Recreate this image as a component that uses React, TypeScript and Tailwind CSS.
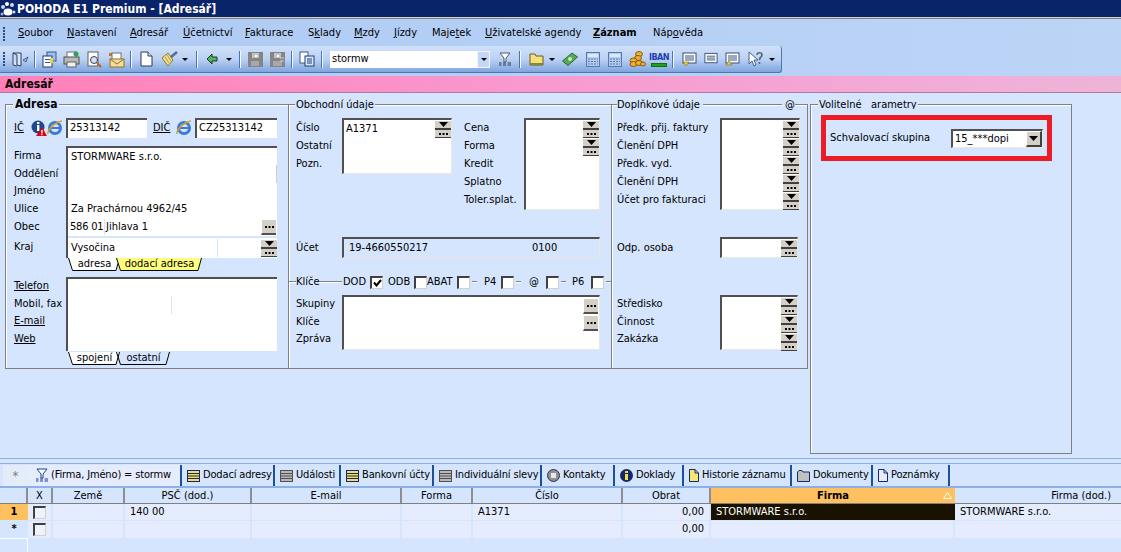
import React from "react";

const Triangle = () => (
  <svg width="9" height="5" viewBox="0 0 9 5" className="block">
    <polygon points="0,0 9,0 4.5,5" fill="#000" />
  </svg>
);

const Dots = () => (
  <svg width="9" height="2" viewBox="0 0 9 2" className="block">
    <rect x="0" width="2" height="2" fill="#000" />
    <rect x="3.5" width="2" height="2" fill="#000" />
    <rect x="7" width="2" height="2" fill="#000" />
  </svg>
);

const Stack = () => (
  <div className="w-[16px] h-[18px] flex flex-col shrink-0">
    <div className="h-[10px] bg-[#d4d0c8] border-t border-t-white border-b-2 border-b-[#404040] flex items-center justify-center">
      <Triangle />
    </div>
    <div className="h-[8px] bg-[#d4d0c8] border-b border-b-[#404040] flex items-center justify-center">
      <Dots />
    </div>
  </div>
);

const DotsButton = ({ className = "" }: { className?: string }) => (
  <div className={"w-[15px] h-[16px] shrink-0 bg-[#d4d0c8] border-t border-l border-white border-b-2 border-b-[#505050] flex items-center justify-center " + className}>
    <Dots />
  </div>
);

const sunken = "border-t-2 border-l-2 border-t-[#505050] border-l-[#505050] border-r border-b border-r-[#e8e8e0] border-b-[#e8e8e0]";
const frame = "border border-[#808080] shadow-[inset_1px_1px_0_#ffffff]";
const rule = "h-[2px] bg-[#808080] border-b border-white";

const Check = ({ on = false, small = false }: { on?: boolean; small?: boolean }) => (
  <div className={"w-[13px] h-[13px] shrink-0 border-t-2 border-l-2 border-t-[#404040] border-l-[#404040] border-r border-b border-r-[#d4d0c8] border-b-[#d4d0c8] flex items-center justify-center " + (small ? "bg-[#eef2fa]" : "bg-white")}>
    {on && (
      <svg width="9" height="8" viewBox="0 0 9 8">
        <path d="M1 3.5 L3.5 6.5 L8 1" fill="none" stroke="#000" strokeWidth="2" />
      </svg>
    )}
  </div>
);

const Labels = ({ items, className }: { items: { t: string; u?: boolean }[]; className: string }) => (
  <div className={"flex flex-col shrink-0 " + className}>
    {items.map((i) => (
      <div key={i.t} className={"h-[17.7px] leading-[17.7px] whitespace-nowrap " + (i.u ? "underline" : "")}>
        {i.t}
      </div>
    ))}
  </div>
);

const TabShape = ({ label, bg, wide }: { label: string; bg: string; wide: string }) => {
  return (
    <div className={"flex h-[13px] -ml-[4px] first:ml-0 " + wide}>
      <svg width="7" height="13" viewBox="0 0 7 13" className="shrink-0">
        <polygon points="0,0 7,0 7,13 4,13" fill={bg} />
        <path d="M0.5 0 L4.5 12.5 L7 12.5" fill="none" stroke="#000" />
      </svg>
      <div className="flex-1 border-b border-black text-center leading-[12px]" style={{ background: bg === "none" ? undefined : bg }}>
        {label}
      </div>
      <svg width="6" height="13" viewBox="0 0 6 13" className="shrink-0">
        <polygon points="0,0 6,0 2,13 0,13" fill={bg} />
        <path d="M0 12.5 L2 12.5 L5.5 0" fill="none" stroke="#000" />
      </svg>
    </div>
  );
};

/* toolbar pictures */
const Door = () => (
  <svg width="17" height="17" viewBox="0 0 17 17">
    <path d="M1 2 H9 V15 L5 14 V4 L1 2 V14 L5 15" fill="#dbe6f7" stroke="#2a3f66" />
    <path d="M16 6 L11 9 L14 11 Z" fill="#9ab8e8" stroke="#2a3f66" strokeWidth="0.7" />
  </svg>
);
const Copy = () => (
  <svg width="17" height="17" viewBox="0 0 17 17">
    <rect x="6" y="1" width="9" height="9" fill="#9cc0ee" stroke="#3a5a90" />
    <rect x="2" y="5" width="9" height="11" fill="#fff" stroke="#1f3f80" />
    <rect x="4" y="8" width="5" height="1" fill="#2a56a8" />
    <rect x="4" y="11" width="5" height="1" fill="#2a56a8" />
    <rect x="9" y="7" width="3" height="5" fill="#f0d040" />
  </svg>
);
const Printer = () => (
  <svg width="17" height="17" viewBox="0 0 17 17">
    <rect x="4" y="1" width="9" height="6" fill="#fff" stroke="#707070" />
    <rect x="1" y="6" width="15" height="7" fill="#b8b8b8" stroke="#505050" />
    <rect x="4" y="11" width="9" height="5" fill="#f0f0f0" stroke="#606060" />
    <circle cx="13" cy="3" r="2.5" fill="#30a050" />
  </svg>
);
const Preview = () => (
  <svg width="17" height="17" viewBox="0 0 17 17">
    <rect x="2" y="1" width="10" height="14" fill="#fff" stroke="#606060" />
    <circle cx="8" cy="9" r="3.5" fill="#cfe2f8" stroke="#404040" />
    <path d="M11 12 L15 16" stroke="#b06820" strokeWidth="2" />
  </svg>
);
const Envelope = () => (
  <svg width="17" height="17" viewBox="0 0 17 17">
    <rect x="1" y="2" width="8" height="3" fill="#e07020" />
    <rect x="4" y="2" width="9" height="7" fill="#fff" stroke="#707070" />
    <rect x="2" y="8" width="14" height="8" fill="#f5dc9a" stroke="#90702a" />
    <path d="M2 8 L9 13 L16 8" fill="none" stroke="#90702a" />
  </svg>
);
const NewDoc = () => (
  <svg width="13" height="16" viewBox="0 0 13 16">
    <path d="M1 1 H8 L12 5 V15 H1 Z" fill="#fff" stroke="#2a3a5a" />
    <path d="M8 1 V5 H12" fill="#dfe8f6" stroke="#2a3a5a" />
  </svg>
);
const Broom = () => (
  <svg width="18" height="16" viewBox="0 0 18 16">
    <path d="M2 7 L8 2 L13 9 L8 15 Z" fill="#f3e08a" stroke="#8a7a30" />
    <path d="M11 6 L17 1" stroke="#5a6a90" strokeWidth="2.5" />
    <path d="M5 6 L9 12 M7 4 L11 10" stroke="#b09a40" />
  </svg>
);
const Back = () => (
  <svg width="12" height="12" viewBox="0 0 12 12">
    <path d="M6 1 L1 6 L6 11 V8 H11 V4 H6 Z" fill="#58b060" stroke="#104020" />
  </svg>
);
const Save = ({ two }: { two?: boolean }) => (
  <svg width="15" height="15" viewBox="0 0 15 15">
    <rect width="15" height="15" fill="#858585" />
    <rect x="4" y="1" width="7" height="5" fill="#c4c4c4" />
    <rect x="3" y="9" width={two ? 9 : 8} height="5" fill="#a8a8a8" />
    {two && <path d="M10 6 H14 M10 9 H14" stroke="#d0d0d0" />}
    <rect x="7" y="3" width="2" height="2" fill="#fff" />
  </svg>
);
const Clip = () => (
  <svg width="16" height="16" viewBox="0 0 16 16">
    <rect x="1" y="1" width="8" height="11" fill="#fff" stroke="#3a5a90" />
    <rect x="6" y="5" width="9" height="10" fill="#dce8fa" stroke="#1f3f80" />
    <path d="M8 8 H13 M8 10 H13 M8 12 H13" stroke="#1f3f80" />
  </svg>
);
const Filter = ({ dark }: { dark?: boolean }) => (
  <svg width="16" height="15" viewBox="0 0 16 15" className="shrink-0">
    <path d="M3 1 H13 L9 6 V10 H7 V6 Z" fill="#fff" stroke={dark ? "#1f3f90" : "#505a70"} />
    <path d="M2 11 H4.5 M6 11 H9 M10.5 11 H14 M2 13 H4.5 M6 13 H9 M10.5 13 H14" stroke={dark ? "#1f3f90" : "#303a50"} strokeWidth="1.2" />
  </svg>
);
const Folder = () => (
  <svg width="15" height="13" viewBox="0 0 15 13">
    <path d="M1 1 H6 L7 3 H14 V12 H1 Z" fill="#f2e07c" stroke="#6a5a20" />
    <rect x="1" y="10" width="13" height="2" fill="#8a8a20" />
  </svg>
);
const Money = () => (
  <svg width="16" height="14" viewBox="0 0 16 14">
    <path d="M0.5 9 L10 1 L15.5 5 L6 13.5 Z" fill="#58a850" stroke="#2a6a30" />
    <circle cx="8" cy="7" r="2" fill="#c8e8c0" />
  </svg>
);
const Calc = () => (
  <svg width="14" height="15" viewBox="0 0 14 15">
    <rect x="0.5" y="0.5" width="13" height="14" fill="#b4cbec" stroke="#5578b0" />
    <rect x="2" y="2" width="10" height="3" fill="#dfe9f8" />
    <path d="M2 7 H12 M2 9.5 H12 M2 12 H12" stroke="#5578b0" strokeDasharray="2 1" />
  </svg>
);
const Coins = () => (
  <svg width="17" height="16" viewBox="0 0 17 16">
    <ellipse cx="10" cy="3" rx="3.5" ry="2.5" fill="#eeb030" stroke="#8a5a10" />
    <ellipse cx="9" cy="7" rx="3.5" ry="2.5" fill="#eeb030" stroke="#8a5a10" />
    <ellipse cx="4.5" cy="9.5" rx="3.5" ry="2.5" fill="#eeb030" stroke="#8a5a10" />
    <ellipse cx="4.5" cy="13" rx="3.5" ry="2.5" fill="#eeb030" stroke="#8a5a10" />
    <ellipse cx="10" cy="12" rx="3.5" ry="2.5" fill="#eeb030" stroke="#8a5a10" />
    <ellipse cx="14" cy="13" rx="2.5" ry="2" fill="#eeb030" stroke="#8a5a10" />
  </svg>
);
const Iban = () => (
  <div className="flex flex-col items-center w-[17px]">
    <span className="text-[9px] leading-[10px] font-bold text-[#1f3fb0] tracking-[-0.5px]">IBAN</span>
    <div className="w-[16px] h-[4px] bg-[#20a020] border border-[#107010] mt-[1px]" />
  </div>
);
const Note = ({ mark }: { mark?: "down" | "up" }) => (
  <svg width="15" height="14" viewBox="0 0 15 14">
    <rect x="1" y="1" width="13" height="10" fill="#fff" stroke="#39507a" />
    <path d="M3 4 H12 M3 6 H12 M3 8 H12" stroke="#39507a" />
    {mark === "down" && <polygon points="1,10 7,10 4,14" fill="#f0d030" stroke="#806a10" strokeWidth="0.6" />}
    {mark === "up" && <polygon points="1,13 7,13 4,9" fill="#f0d030" stroke="#806a10" strokeWidth="0.6" />}
  </svg>
);
const Help = () => (
  <div className="flex items-center">
    <svg width="16" height="16" viewBox="0 0 16 16">
      <path d="M1 1 L1 13 L4 10 L6 15 L8 14 L6 9 L10 9 Z" fill="#fff" stroke="#4a6090" />
      <path d="M9 4 C9 1 14 1 14 4 C14 6 11.5 6 11.5 9 M11.5 11 V13" fill="none" stroke="#58647a" strokeWidth="1.6" />
    </svg>
  </div>
);
const Sep = () => <div className="w-[2px] h-[17px] bg-[#f4f8ff] border-l border-[#4a72b4]" />;
const Drop = () => (
  <svg width="6" height="3" viewBox="0 0 6 3">
    <polygon points="0,0 6,0 3,3" fill="#000" />
  </svg>
);
const Grip = () => (
  <div className="flex flex-col gap-[1px] w-[2px]">
    {[0, 1, 2, 3, 4].map((i) => (
      <div key={i} className="w-[2px] h-[2px] bg-[#2a4a80]" />
    ))}
  </div>
);

const IeIcon = () => (
  <svg width="16" height="16" viewBox="0 0 16 16">
    <circle cx="8" cy="8" r="5.5" fill="none" stroke="#3a7ad8" strokeWidth="3" />
    <path d="M4 8 H13" stroke="#3a7ad8" strokeWidth="2" />
    <path d="M1 14 C0 10 8 2 15 1" fill="none" stroke="#d8a020" strokeWidth="1.4" />
  </svg>
);
const InfoWarn = () => (
  <svg width="16" height="17" viewBox="0 0 16 17">
    <circle cx="7" cy="7" r="6.5" fill="#1c4a8c" />
    <rect x="6" y="2" width="2.4" height="2" fill="#fff" />
    <rect x="6" y="5" width="2.4" height="6" fill="#fff" />
    <polygon points="11,7 16,16 5,16" fill="#e00010" />
    <rect x="10.2" y="10" width="1.4" height="3.5" fill="#fff" />
    <rect x="10.2" y="14" width="1.4" height="1.2" fill="#fff" />
  </svg>
);

const ListIcon = ({ fill, line }: { fill: string; line: string }) => (
  <svg width="13" height="12" viewBox="0 0 13 12" className="shrink-0">
    <rect x="0.5" y="0.5" width="12" height="11" fill={fill} stroke={line} />
    <path d="M1 3.5 H12 M1 6 H12 M1 8.5 H12" stroke={line} />
  </svg>
);
const PageIcon = ({ fill }: { fill: string }) => (
  <svg width="10" height="13" viewBox="0 0 10 13" className="shrink-0">
    <path d="M0.5 0.5 H6 L9.5 4 V12.5 H0.5 Z" fill={fill} stroke="#14286a" />
    <path d="M6 0.5 V4 H9.5" fill="none" stroke="#14286a" />
  </svg>
);

const Tab = ({ icon, label, w }: { icon: React.ReactNode; label: string; w: string }) => (
  <div className={"h-[21px] flex items-center gap-[3px] pl-[5px] border-r-2 border-[#1c4f9c] whitespace-nowrap overflow-hidden tracking-[-0.15px] " + w}>
    {icon}
    <span>{label}</span>
  </div>
);

const columns = "grid grid-cols-[28px_25px_72px_127px_150px_71px_150px_88px_244px_166px]";
const head = "border-r-2 border-[#8e8e8e] text-center leading-[15px]";
const cell = "border-r-2 border-[#d4e5fd] leading-[16px]";

const App: React.FC = () => {
  return (
    <div className="w-[1121px] h-[552px] overflow-hidden flex flex-col bg-[#d4e5fd] text-[11px] text-black font-['DejaVu_Sans_Condensed','DejaVu_Sans',sans-serif]">
      {/* title bar */}
      <div className="h-[17px] bg-[#0a246a] flex items-center text-white font-bold text-[12px] shrink-0">
        <svg width="17" height="16" viewBox="0 0 17 16" className="shrink-0">
          <circle cx="3" cy="6" r="2" fill="#cfd8f0" />
          <circle cx="7" cy="3" r="2" fill="#fff" />
          <circle cx="12" cy="4" r="2" fill="#cfd8f0" />
          <ellipse cx="8" cy="11" rx="4.5" ry="3.5" fill="#fff" />
          <circle cx="14" cy="11" r="1.5" fill="#cfd8f0" />
          <circle cx="2" cy="13" r="1.5" fill="#9fb0e0" />
        </svg>
        <span>POHODA E1 Premium - [Adresář]</span>
      </div>
      <div className="h-[2px] bg-[#d4d0c8] border-b border-[#808080] shrink-0" />

      {/* menu */}
      <div className="h-[27px] pt-[2px] bg-gradient-to-r from-[#aecbf4] to-[#bcd4f6] flex items-center shrink-0">
        <div className="w-[4px] ml-[3px]"><Grip /></div>
        <div className="ml-[11px] grid grid-cols-[49px_63px_53px_62px_63px_46px_40px_38px_53px_108px_60px_60px]">
          <span><u>S</u>oubor</span>
          <span><u>N</u>astavení</span>
          <span><u>A</u>dresář</span>
          <span><u>Ú</u>četnictví</span>
          <span><u>F</u>akturace</span>
          <span>S<u>k</u>lady</span>
          <span><u>M</u>zdy</span>
          <span><u>J</u>ízdy</span>
          <span>Maje<u>t</u>ek</span>
          <span><u>U</u>živatelské agendy</span>
          <span className="font-bold"><u>Z</u>áznam</span>
          <span>Náp<u>o</u>věda</span>
        </div>
      </div>

      {/* toolbar */}
      <div className="h-[30px] bg-gradient-to-r from-[#aecbf4] to-[#bcd4f6] shrink-0">
        <div className="w-[782px] h-[27px] rounded-r-[3px] bg-gradient-to-b from-[#cfe0f9] via-[#bcd2f4] to-[#7fa4de] border-r border-b border-[#4f74b0] flex items-center">
          <div className="w-[10px] pl-[3px]"><Grip /></div>
          <div className="w-[21px] flex justify-center"><Door /></div>
          <div className="w-[8px] flex justify-center"><Sep /></div>
          <div className="w-[21px] flex justify-center"><Copy /></div>
          <div className="w-[23px] flex justify-center"><Printer /></div>
          <div className="w-[22px] flex justify-center"><Preview /></div>
          <div className="w-[22px] flex justify-center"><Envelope /></div>
          <div className="w-[8px] flex justify-center"><Sep /></div>
          <div className="w-[22px] flex justify-center"><NewDoc /></div>
          <div className="w-[24px] flex justify-center"><Broom /></div>
          <div className="w-[8px] flex justify-center"><Drop /></div>
          <div className="w-[16px] flex justify-center"><Sep /></div>
          <div className="w-[14px] flex justify-center"><Back /></div>
          <div className="w-[20px] flex justify-center"><Drop /></div>
          <div className="w-[2px] flex justify-center"><Sep /></div>
          <div className="w-[28px] flex justify-center"><Save /></div>
          <div className="w-[16px] flex justify-center"><Save two /></div>
          <div className="w-[14px] flex justify-center"><Sep /></div>
          <div className="w-[16px] flex justify-center"><Clip /></div>
          <div className="w-[14px] flex justify-center"><Sep /></div>
          <div className="ml-px w-[160px] h-[17px] bg-white flex items-center justify-between pl-[2px]">
            <span>stormw</span>
            <div className="w-[13px] h-[17px] bg-[#c3d7f6] border border-[#f0f5ff] flex items-center justify-center"><Drop /></div>
          </div>
          <div className="w-[26px] pl-[7px]"><Filter /></div>
          <div className="w-[8px] flex justify-center"><Sep /></div>
          <div className="w-[24px] flex justify-center"><Folder /></div>
          <div className="w-[8px] flex justify-center"><Drop /></div>
          <div className="w-[28px] flex justify-center"><Money /></div>
          <div className="w-[18px] flex justify-center"><Calc /></div>
          <div className="w-[26px] flex justify-center"><Calc /></div>
          <div className="w-[18px] flex justify-center"><Coins /></div>
          <div className="w-[26px] flex justify-center"><Iban /></div>
          <div className="w-[2px] flex justify-center"><Sep /></div>
          <div className="w-[30px] flex justify-center"><Note mark="down" /></div>
          <div className="w-[14px] flex justify-center"><Note /></div>
          <div className="w-[28px] flex justify-center"><Note mark="up" /></div>
          <div className="w-[20px] flex justify-center"><Help /></div>
          <div className="w-[12px] flex justify-center"><Drop /></div>
        </div>
      </div>

      {/* agenda band */}
      <div className="h-[17px] bg-gradient-to-r from-[#ff80b8] via-[#f89ad0] to-[#eeb4d8] border-b border-[#b07a98] font-bold text-[12px] leading-[16px] pl-[5px] shrink-0">
        Adresář
      </div>

      {/* form */}
      <div className="h-[364px] flex pt-[5px] pl-[5px] shrink-0">
        <div className="flex h-[271px]">
          <fieldset className={"w-[284px] h-full " + frame}>
            <legend className="ml-[7px] px-[2px] h-[13px] leading-[13px] font-bold text-[12px] bg-[#d4e5fd]">Adresa</legend>
            <div className="pl-[8px] pt-[7px]">
              <div className="flex items-center h-[20px]">
                <div className="w-[52px] flex items-center">
                  <u className="w-[17px]">IČ</u>
                  <InfoWarn />
                  <IeIcon />
                </div>
                <div className="w-[81px] h-[20px] bg-white pl-[2px] leading-[16px] border-t-2 border-l-2 border-[#505050]">25313142</div>
                <u className="ml-[6px] w-[23px]">DIČ</u>
                <div className="w-[19px]"><IeIcon /></div>
                <div className="w-[82px] h-[20px] bg-white pl-[2px] leading-[16px] border-t-2 border-l-2 border-[#505050]">CZ25313142</div>
              </div>

              <div className="flex mt-[8px]">
                <Labels className="w-[52px] pt-[1px] [&>div:last-child]:mt-[2.5px]" items={[{ t: "Firma" }, { t: "Oddělení" }, { t: "Jméno" }, { t: "Ulice" }, { t: "Obec" }, { t: "Kraj" }]} />
                <div className="w-[211px] h-[112px] bg-white border-t-2 border-l-2 border-[#505050] flex flex-col">
                  <div className="h-[17px] pl-[3px] leading-[17px]">STORMWARE s.r.o.</div>
                  <div className="h-[18px] border-r border-[#c8ccd8]" />
                  <div className="h-[17px]" />
                  <div className="h-[18px] pl-[3px] leading-[18px]">Za Prachárnou 4962/45</div>
                  <div className="h-[20px] flex items-center border-b-2 border-[#d4e5fd] whitespace-nowrap">
                    <span className="w-[37px] pl-[2px] border-r border-[#d4e5fd] tracking-[-0.2px]">586 01</span>
                    <span className="flex-1 pl-[1px]">Jihlava 1</span>
                    <DotsButton className="mr-px" />
                  </div>
                  <div className="flex items-center flex-1">
                    <span className="w-[150px] pl-[3px] border-r border-[#d4e5fd] leading-[18px]">Vysočina</span>
                    <span className="flex-1" />
                    <Stack />
                  </div>
                </div>
              </div>
              <div className="ml-[54px] flex">
                <TabShape label="adresa" bg="#ffffff" wide="w-[52px]" />
                <TabShape label="dodací adresa" bg="#ffff80" wide="w-[86px]" />
              </div>

              <div className="flex mt-[6px]">
                <Labels className="w-[52px]" items={[{ t: "Telefon", u: true }, { t: "Mobil, fax" }, { t: "E-mail", u: true }, { t: "Web", u: true }]} />
                <div className="w-[211px] h-[74px] bg-white border-t-2 border-l-2 border-[#505050] flex flex-col">
                  <div className="h-[17px]" />
                  <div className="h-[18px] flex">
                    <span className="w-[104px] border-r border-[#d4e5fd]" />
                  </div>
                </div>
              </div>
              <div className="ml-[54px] mt-px flex">
                <TabShape label="spojení" bg="#ffffff" wide="w-[52px]" />
                <TabShape label="ostatní" bg="none" wide="w-[54px]" />
              </div>
            </div>
          </fieldset>

          <fieldset className={"w-[323px] h-full border-l-0 " + frame}>
            <legend className="ml-[6px] px-px h-[13px] leading-[13px] bg-[#d4e5fd]">Obchodní údaje</legend>
            <div className="pt-[7px]">
              <div className="flex h-[92px] pl-[7px]">
                <Labels className="w-[46px] pt-px [&>div]:h-[18px] [&>div]:leading-[18px]" items={[{ t: "Číslo" }, { t: "Ostatní" }, { t: "Pozn." }]} />
                <div className={"w-[110px] h-[56px] bg-white flex justify-between pl-[2px] " + sunken}>
                  <span className="leading-[17px]">A1371</span>
                  <Stack />
                </div>
                <Labels className="w-[60px] ml-[12px] pt-px [&>div]:h-[18px] [&>div]:leading-[18px]" items={[{ t: "Cena" }, { t: "Forma" }, { t: "Kredit" }, { t: "Splatno" }, { t: "Toler.splat." }]} />
                <div className={"w-[76px] h-[92px] bg-white flex flex-col items-end " + sunken}>
                  <Stack />
                  <Stack />
                </div>
              </div>

              <div className="flex pl-[7px] mt-[27px]">
                <div className="w-[46px] leading-[21px]">Účet</div>
                <div className={"w-[258px] h-[21px] bg-[#d4e5fd] pl-[5px] flex items-center " + sunken}>
                  <span className="w-[183px]">19-4660550217</span>
                  <span>0100</span>
                </div>
              </div>

              <div className="flex items-center h-[14px] mt-[17px]">
                <div className={"w-[7px] " + rule} />
                <span className="w-[23px]">Klíče</span>
                <div className={"w-[23px] " + rule} />
                <span className="w-[28px] pl-px">DOD</span>
                <Check on />
                <span className="w-[31px] pl-[5px]">ODB</span>
                <Check />
                <span className="w-[30px] overflow-hidden text-right pr-[6px] whitespace-nowrap">ABAT</span>
                <Check />
                <div className={"w-[5px] ml-[2px] " + rule} />
                <span className="w-[24px] pl-[7px]">P4</span>
                <Check />
                <div className={"w-[5px] ml-[2px] " + rule} />
                <span className="w-[25px] pl-[8px]">@</span>
                <Check />
                <div className={"w-[5px] ml-[2px] " + rule} />
                <span className="w-[25px] pl-[6px]">P6</span>
                <Check />
                <div className={"flex-1 ml-[2px] " + rule} />
              </div>

              <div className="flex pl-[7px] mt-[6px]">
                <Labels className="w-[46px]" items={[{ t: "Skupiny" }, { t: "Klíče" }, { t: "Zpráva" }]} />
                <div className={"w-[258px] h-[55px] bg-white flex flex-col items-end pt-[1px] pr-[1px] " + sunken}>
                  <DotsButton />
                  <DotsButton className="mt-px" />
                </div>
              </div>
            </div>
          </fieldset>

          <fieldset className={"w-[196px] h-full border-l-0 " + frame}>
            <legend className="ml-[5px] w-[178px] h-[13px] flex items-center leading-[13px] bg-[#d4e5fd]">
              <span>Doplňkové údaje</span>
              <div className={"flex-1 mx-[3px] mt-[1px] " + rule} />
              <span>@</span>
            </legend>
            <div className="pt-[7px] pl-[5px]">
              <div className="flex">
                <Labels className="w-[103px] pt-px [&>div]:h-[18px] [&>div]:leading-[18px]" items={[{ t: "Předk. přij. faktury" }, { t: "Členění DPH" }, { t: "Předk. vyd." }, { t: "Členění DPH " }, { t: "Účet pro fakturaci" }]} />
                <div className={"w-[80px] h-[92px] bg-white flex flex-col items-end " + sunken}>
                  <Stack />
                  <Stack />
                  <Stack />
                  <Stack />
                  <Stack />
                </div>
              </div>
              <div className="flex mt-[27px]">
                <div className="w-[103px] leading-[21px]">Odp. osoba</div>
                <div className={"w-[78px] h-[21px] bg-white flex justify-end " + sunken}>
                  <Stack />
                </div>
              </div>
              <div className="flex mt-[37px]">
                <Labels className="w-[103px]" items={[{ t: "Středisko" }, { t: "Činnost" }, { t: "Zakázka" }]} />
                <div className={"w-[78px] h-[55px] bg-white flex flex-col items-end " + sunken}>
                  <Stack />
                  <Stack />
                  <Stack />
                </div>
              </div>
            </div>
          </fieldset>
        </div>

        <fieldset className={"ml-[2px] w-[262px] h-[356px] " + frame}>
          <legend className="ml-[7px] px-px h-[13px] leading-[13px] overflow-hidden bg-[#d4e5fd]">
            <div className="h-[11px] overflow-hidden whitespace-nowrap">Volitelné <span className="text-[#d4e5fd]">p</span>arametry</div>
          </legend>
          <div className="ml-[10px] mt-[4px] w-[231px] h-[46px] border-[5px] border-[#ed1c24] flex pl-[4px] pt-[9px]">
            <span className="w-[121px] leading-[18px]">Schvalovací skupina</span>
            <div className={"w-[92px] h-[19px] bg-white flex items-center justify-between pl-[2px] " + sunken}>
              <span>15_***dopi</span>
              <div className="w-[16px] h-full bg-[#d4d0c8] border-t border-l border-white border-r-2 border-b-2 border-r-[#404040] border-b-[#404040] flex items-center justify-center">
                <Triangle />
              </div>
            </div>
          </div>
        </fieldset>
      </div>

      {/* bottom tabs */}
      <div className="h-[6px] mt-px border-y border-[#8cb0e8] mb-px shrink-0" />
      <div className="flex pl-[3px] shrink-0 h-[23px] border-b-2 border-[#8cb0e8]">
        <div className="w-[25px] h-[21px] bg-[#e4ecfa] flex items-center justify-center text-[#808080] text-[13px]">*</div>
        <div className="w-[154px] h-[21px] bg-[#e4ecfd] flex items-center gap-[1px] pl-[6px] border-r-2 border-[#1c4f9c] tracking-[-0.15px]">
          <Filter dark />
          <span className="whitespace-nowrap">(Firma, Jméno) = stormw</span>
        </div>
        <Tab w="w-[93px]" icon={<ListIcon fill="#f4e060" line="#14286a" />} label="Dodací adresy" />
        <Tab w="w-[66px]" icon={<ListIcon fill="#b8b8b8" line="#505050" />} label="Události" />
        <Tab w="w-[93px]" icon={<ListIcon fill="#f4e060" line="#14286a" />} label="Bankovní účty" />
        <Tab w="w-[108px]" icon={<ListIcon fill="#b8b8b8" line="#505050" />} label="Individuální slevy" />
        <Tab
          w="w-[73px]"
          icon={
            <svg width="13" height="13" viewBox="0 0 13 13" className="shrink-0">
              <circle cx="6.5" cy="6.5" r="6" fill="#909090" stroke="#303060" />
              <rect x="4" y="4" width="5" height="5" fill="#e8e8e8" />
            </svg>
          }
          label="Kontakty"
        />
        <Tab
          w="w-[69px]"
          icon={
            <svg width="13" height="13" viewBox="0 0 13 13" className="shrink-0">
              <circle cx="6.5" cy="6.5" r="6.5" fill="#14286a" />
              <rect x="5" y="2" width="3" height="2" fill="#f0e040" />
              <rect x="5" y="5" width="3" height="6" fill="#f0e040" />
            </svg>
          }
          label="Doklady"
        />
        <Tab w="w-[108px]" icon={<PageIcon fill="#f4e870" />} label="Historie záznamu" />
        <Tab
          w="w-[81px]"
          icon={
            <svg width="13" height="12" viewBox="0 0 13 12" className="shrink-0">
              <path d="M0.5 2 L2 0.5 H5 L6 2 H12.5 V11.5 H0.5 Z" fill="#c0c0c0" stroke="#14286a" />
            </svg>
          }
          label="Dokumenty"
        />
        <Tab w="w-[77px]" icon={<PageIcon fill="#e8ecf8" />} label="Poznámky" />
      </div>

      {/* table */}
      <div className={columns + " h-[16px] shrink-0 border-b border-[#808080]"}>
        <div className="border-r-2 border-[#8e8e8e]" />
        <div className={head}>X</div>
        <div className={head}>Země</div>
        <div className={head}>PSČ (dod.)</div>
        <div className={head}>E-mail</div>
        <div className={head}>Forma</div>
        <div className={head}>Číslo</div>
        <div className={head}>Obrat</div>
        <div className="bg-[#ffc060] font-bold leading-[15px] flex items-center">
          <span className="flex-1 text-center">Firma</span>
          <svg width="9" height="7" viewBox="0 0 9 7" className="-ml-[12px] mr-[3px] shrink-0">
            <path d="M4.5 0.5 L8.5 6.5 H0.5 Z" fill="none" stroke="#fff" />
          </svg>
        </div>
        <div className="text-right pr-[10px] leading-[15px]">Firma (dod.)</div>
      </div>
      <div className={columns + " h-[17px] bg-[#e4ecfd] border-b border-[#d4e5fd] shrink-0"}>
        <div className="bg-[#ffc060] font-bold text-center leading-[16px]">1</div>
        <div className={cell + " flex items-center justify-center"}><Check small /></div>
        <div className={cell} />
        <div className={cell + " pl-[5px]"}>140 00</div>
        <div className={cell} />
        <div className={cell} />
        <div className={cell + " pl-[5px]"}>A1371</div>
        <div className={cell + " text-right pr-[5px]"}>0,00</div>
        <div className="bg-[#1a1200] text-white pl-[5px] leading-[16px]">STORMWARE s.r.o.</div>
        <div className="pl-[5px] leading-[16px]">STORMWARE s.r.o.</div>
      </div>
      <div className={columns + " h-[17px] bg-[#e4ecfd] shrink-0"}>
        <div className="font-bold text-center leading-[16px] bg-[#d4e5fd]">*</div>
        <div className={cell + " flex items-center justify-center"}><Check small /></div>
        <div className={cell} />
        <div className={cell} />
        <div className={cell} />
        <div className={cell} />
        <div className={cell} />
        <div className={cell + " text-right pr-[5px]"}>0,00</div>
        <div className={cell} />
        <div />
      </div>
      <div className="flex-1 w-[28px] border-r border-t border-white" />
    </div>
  );
};

export default App;
